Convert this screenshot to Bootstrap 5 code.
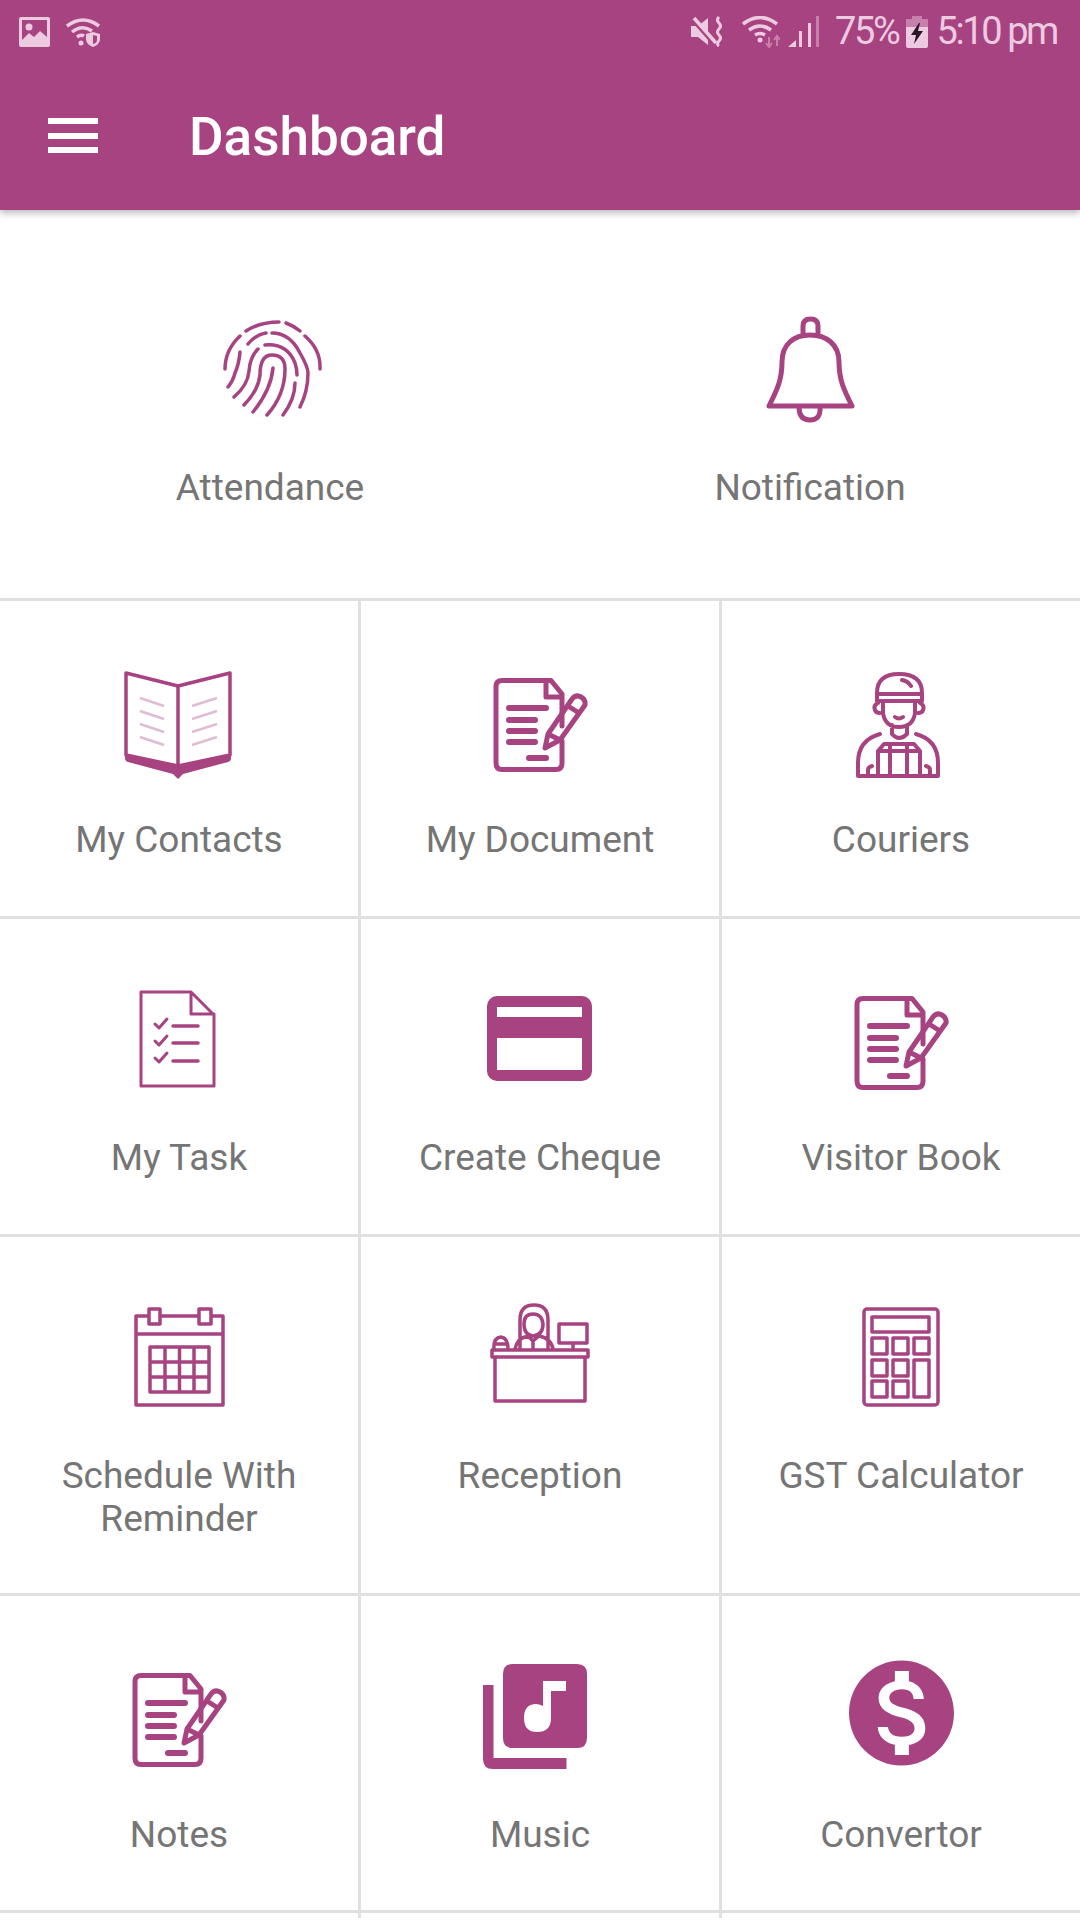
<!DOCTYPE html>
<html lang="en">
<head>
  <meta charset="UTF-8" />
  <title>Dashboard</title>
  <link href="https://cdn.jsdelivr.net/npm/bootstrap@5.3.0/dist/css/bootstrap.min.css" rel="stylesheet"/>
  <style>
    body { font-family: Roboto, "Liberation Sans", sans-serif; color: #757575; background: #fff; }
    .app-screen { height: 1920px; overflow: hidden; }
    .app-head { background: #a74380; height: 210px; box-shadow: 0 3px 7px rgba(0,0,0,.28); position: relative; }
    .status-bar { height: 63px; padding: 0 23px 0 19px; color: #eccbe0; font-size: 38px; letter-spacing: -2.4px; }
    .tool-bar { height: 147px; padding: 0 0 2px 48px; }
    .burger { width: 50px; height: 35px; }
    .burger span { display: block; height: 6px; background: #fff; }
    .app-title { margin: 4px 0 0 91px; font-size: 53px; font-weight: 500; color: #fff; line-height: 1; }
    .svg-line { fill: none; stroke: #a74380; stroke-width: 5; stroke-linecap: round; stroke-linejoin: round; }
    .svg-fill { fill: #a74380; }
    .sw-3 { stroke-width: 3; }
    .sw-35 { stroke-width: 3.5; }
    .sw-4 { stroke-width: 4; }
    .sw-6 { stroke-width: 6; }
    .tile-label { font-size: 37px; line-height: 43px; margin-top: 35px; }
    .top-tile { padding: 100px 0 89px; }
    .top-tile .tile-label { margin-top: 36px; }
    .tile-grid { border-top: 3px solid #e0e0e0; grid-template-columns: 361px 361px 1fr; grid-template-rows: 318px 318px 359px 317px 5px; }
    .tile { padding-top: 62px; border-right: 3px solid #e0e0e0; border-bottom: 3px solid #e0e0e0; }
    .tile:nth-child(3n) { border-right: 0; }
    .tile-end { padding-top: 0; border-bottom: 0; }
  </style>
</head>
<body>
  <svg width="0" height="0" class="d-block">
    <symbol id="doc-pen" viewBox="0 0 120 120">
      <path class="svg-line" d="M66 17.500H22q-6 0-6 6V100q0 6.500 6 6.500h54q6 0 6-6.500V78M82 63V31L71 17.500H66V34h16"/>
      <path class="svg-line sw-6" d="M29 45h37M29 57h26M29 68h26M29 79h26M49 95h17"/>
      <path class="svg-line" d="M65 85l3-14 24-35q4-5 9-2t4 8L80 77zM68 71l12 6M88 43l11 7"/>
    </symbol>
  </svg>

  <div class="app-screen d-flex flex-column">
    <header class="app-head flex-shrink-0">
      <div class="status-bar d-flex justify-content-between align-items-center">
        <div class="d-flex align-items-center gap-3">
          <svg width="31" height="30" viewBox="0 0 31 30"><rect width="31" height="30" rx="2" fill="#eccbe0"/><rect x="3" y="3" width="25" height="20" fill="#a74380"/><circle cx="10" cy="10" r="3.500" fill="#eccbe0"/><path d="M3 23l7-7 5 4 6-6 7 6v6H3z" fill="#eccbe0"/></svg>
          <svg width="35" height="30" viewBox="0 0 35 30"><g fill="none" stroke="#eccbe0" stroke-width="3.500"><path d="M1 9q16-12 32 0M6 15q10-8 20-1M11 20q4-3 7-1"/></g><circle cx="15" cy="26" r="2.500" fill="#eccbe0"/><path d="M27 15l7 2v6q-1 5-7 7-6-2-7-7v-6z" fill="#eccbe0"/><path d="M27 18l4 1v4q0 3-4 4z" fill="#a74380"/></svg>
        </div>
        <div class="d-flex align-items-center">
          <svg width="35" height="31" viewBox="0 0 35 31" class="me-3"><path d="M0 10h7l10-8v27l-10-8H0z" fill="#eccbe0"/><path d="M1 2l22 25" stroke="#a74380" stroke-width="5"/><path d="M3 2l22 25" stroke="#eccbe0" stroke-width="3.500"/><path d="M28 1q-3 3 0 6t0 6 0 6 0 6 0 5" fill="none" stroke="#eccbe0" stroke-width="3"/></svg>
          <svg width="38" height="32" viewBox="0 0 38 32"><g fill="none" stroke="#eccbe0" stroke-width="3.500"><path d="M1 8q17-13 34 0M7 14q11-8 22 0M13 19q5-3 10 0"/></g><circle cx="18" cy="24" r="2.500" fill="#eccbe0"/><path d="M27 21v9M24 27l3 4 3-4M35 30v-9M32 24l3-4 3 4" fill="none" stroke="#c77fab" stroke-width="2"/></svg>
          <svg width="31" height="32" viewBox="0 0 31 32" class="ms-2"><path d="M0 31l8-7v7z" fill="#eccbe0"/><rect x="11" y="15" width="3" height="16" fill="#eccbe0"/><rect x="20" y="7" width="3" height="24" fill="#eccbe0"/><rect x="28" y="0" width="3" height="31" fill="#c77fab"/></svg>
          <span class="ms-3">75%</span>
          <svg width="22" height="32" viewBox="0 0 22 32" class="ms-2"><rect x="6" y="0" width="10" height="4" fill="#c77fab"/><rect y="3" width="22" height="29" rx="2" fill="#eccbe0"/><rect y="3" width="22" height="8" fill="#c77fab"/><path d="M13 7L5 19h5l-2 9 9-13h-5l2-8z" fill="#2a1624"/></svg>
          <span class="ms-2">5:10 pm</span>
        </div>
      </div>
      <div class="tool-bar d-flex align-items-center">
        <div class="burger d-flex flex-column justify-content-between"><span></span><span></span><span></span></div>
        <h1 class="app-title">Dashboard</h1>
      </div>
    </header>

    <main>
      <div class="row g-0">
        <div class="col-6 top-tile d-flex flex-column align-items-center text-center">
          <svg width="120" height="120" viewBox="0 0 120 120" class="d-block">
            <g class="svg-line sw-35">
              <path d="M36 21q14-9 33-9M76 13q8 3 14 8M30 26Q15 40 15 59M95 26q16 14 15 33"/>
              <path d="M38 34q7-9 18-11M62 23q18 0 28 20 8 14 8 20 0 18-8 34M30 42q-1 12-5 21-2 8-7 14"/>
              <path d="M48 39q-8 8-9 22-1 14-15 26M55 35q22-2 30 18 2 6 2 12M85 73q0 16-12 32"/>
              <path d="M34 95q14-14 16-30 0-20 12-20 13 0 13 14 0 26-18 46"/>
              <path d="M43 102q18-22 20-44"/>
            </g>
          </svg>
          <div class="tile-label">Attendance</div>
        </div>
        <div class="col-6 top-tile d-flex flex-column align-items-center text-center">
          <svg width="120" height="120" viewBox="0 0 120 120" class="d-block">
            <path class="svg-line" d="M53 25V16q0-7 7.500-7T68 16v9M19 96C27 80 32 70 32 52 32 34 44 25 60 25S89 34 89 52C89 70 94 80 102 96zM49 97q0 13 11 13t10-13"/>
          </svg>
          <div class="tile-label">Notification</div>
        </div>
      </div>

      <div class="d-grid tile-grid">
        <div class="tile d-flex flex-column align-items-center text-center">
          <svg width="120" height="120" viewBox="0 0 120 120" class="d-block">
            <path class="svg-fill" d="M6 91v4q0 3 3 4l45 12 5 5 5-5 45-12q3-1 3-4v-4L59 103z"/>
            <path class="svg-line sw-35" d="M7 10l52 13 52-13v82l-52 11L7 92zM59 23v80"/>
            <path fill="none" stroke="#e0bcd4" stroke-width="2.500" d="M21 35l24 8M21 48l24 8M21 61l24 8M21 74l24 8M73 43l25-8M73 56l25-8M73 69l25-8M73 82l25-8"/>
          </svg>
          <div class="tile-label">My Contacts</div>
        </div>
        <div class="tile d-flex flex-column align-items-center text-center">
          <svg width="120" height="120" class="d-block"><use href="#doc-pen"/></svg>
          <div class="tile-label">My Document</div>
        </div>
        <div class="tile d-flex flex-column align-items-center text-center">
          <svg width="120" height="120" viewBox="0 0 120 120" class="d-block">
            <path class="svg-line sw-4" d="M36 38V30q0-19 22-19 23 0 23 19v8zM36 31h45M61 17q6 1 9 6M42 38v12q2 14 16 14t16-14V38M37 40q-5 2-3 7 1 3 5 3M79 40q5 2 3 7-1 3-5 3M54 54q4 3 8 0M51 62v9q7 8 15 0v-9M39 71q-22 6-22 29v13h80v-13q0-23-22-29M37 113V88l6-7h30l6 7v25M37 88h42M49 81v32M66 81v32M27 113v-6q0-3 4-4M89 113v-6q0-3-4-4"/>
          </svg>
          <div class="tile-label">Couriers</div>
        </div>

        <div class="tile d-flex flex-column align-items-center text-center">
          <svg width="120" height="120" viewBox="0 0 120 120" class="d-block">
            <path class="svg-line sw-3" d="M72 11H22v94h73V34L72 11v22h23"/>
            <path class="svg-line sw-3" d="M36 43l4 4 8-9M36 60l4 4 8-9M36 77l4 4 8-9"/>
            <path class="svg-line sw-35" d="M54 45h25M54 62h25M54 80h25"/>
          </svg>
          <div class="tile-label">My Task</div>
        </div>
        <div class="tile d-flex flex-column align-items-center text-center">
          <svg width="120" height="120" viewBox="0 0 120 120" class="d-block">
            <rect class="svg-fill" x="7" y="15" width="105" height="85" rx="10"/>
            <rect x="17" y="26" width="85" height="10" fill="#fff"/>
            <rect x="17" y="57" width="85" height="32" fill="#fff"/>
          </svg>
          <div class="tile-label">Create Cheque</div>
        </div>
        <div class="tile d-flex flex-column align-items-center text-center">
          <svg width="120" height="120" class="d-block"><use href="#doc-pen"/></svg>
          <div class="tile-label">Visitor Book</div>
        </div>

        <div class="tile d-flex flex-column align-items-center text-center">
          <svg width="120" height="120" viewBox="0 0 120 120" class="d-block">
            <path class="svg-line sw-35" d="M29 17H17v89h87V17H92M41 17h39M17 35h87M30 10h11v15H30zM80 10h12v15H80z"/>
            <path class="svg-line sw-35" d="M31 48h59v45H31zM31 63h59M31 78h59M46 48v45M60.500 48v45M75 48v45"/>
          </svg>
          <div class="tile-label">Schedule With<br>Reminder</div>
        </div>
        <div class="tile d-flex flex-column align-items-center text-center">
          <svg width="120" height="120" viewBox="0 0 120 120" class="d-block">
            <path class="svg-line sw-35" d="M15 58v44h90V58M12 51h96v7H12zM40 50V21q0-15 14-15t14 15v29M53 15q-9 0-9 10 0 11 9 12 10-1 10-12-1-10-10-10M35 50q2-11 13-13l5 5 6-5q12 2 14 13M53 42v8M79 25h28v19H79zM93 44v7M14 50q-1-11 7-12 7 1 7 12M15 45h12"/>
          </svg>
          <div class="tile-label">Reception</div>
        </div>
        <div class="tile d-flex flex-column align-items-center text-center">
          <svg width="120" height="120" viewBox="0 0 120 120" class="d-block">
            <rect class="svg-line sw-35" x="23" y="10" width="74" height="96" rx="3"/>
            <path class="svg-line sw-35" d="M31 18h57v15H31zM31 39h15v16H31zM52 39h15v16H52zM73 39h15v16H73zM31 61h15v16H31zM52 61h15v16H52zM73 61h15v37H73zM31 82h15v16H31zM52 82h15v16H52z"/>
          </svg>
          <div class="tile-label">GST Calculator</div>
        </div>

        <div class="tile d-flex flex-column align-items-center text-center">
          <svg width="120" height="120" class="d-block"><use href="#doc-pen"/></svg>
          <div class="tile-label">Notes</div>
        </div>
        <div class="tile d-flex flex-column align-items-center text-center">
          <svg width="120" height="120" viewBox="0 0 120 120" class="d-block">
            <path class="svg-fill" d="M3 27h10.500v73H86.500v11H13q-10 0-10-10z"/>
            <path class="svg-fill" fill-rule="evenodd" d="M33 6h64q10 0 10 10v64q0 10-10 10H33q-10 0-10-10V16q0-10 10-10zM63 23v25q-4-2-7-2-12 0-12 14t13 14q14 0 14-14V33h15V23z"/>
          </svg>
          <div class="tile-label">Music</div>
        </div>
        <div class="tile d-flex flex-column align-items-center text-center">
          <svg width="120" height="120" viewBox="0 0 120 120" class="d-block">
            <path class="svg-fill" transform="translate(-2.500 -8) scale(5.250)" d="M12 2C6.480 2 2 6.480 2 12s4.480 10 10 10 10-4.480 10-10S17.520 2 12 2zm1.410 16.090V20h-2.670v-1.930c-1.710-.36-3.160-1.460-3.270-3.400h1.960c.1 1.050.82 1.870 2.650 1.870 1.960 0 2.400-.98 2.400-1.590 0-.83-.44-1.610-2.670-2.140-2.480-.6-4.180-1.620-4.180-3.670 0-1.720 1.390-2.840 3.110-3.210V4h2.670v1.950c1.860.45 2.790 1.860 2.850 3.390H14.300c-.05-1.110-.64-1.870-2.220-1.870-1.500 0-2.400.68-2.400 1.640 0 .84.65 1.390 2.670 1.910s4.180 1.390 4.180 3.910c-.01 1.830-1.380 2.830-3.120 3.160z"/>
          </svg>
          <div class="tile-label">Convertor</div>
        </div>

        <div class="tile tile-end"></div>
        <div class="tile tile-end"></div>
        <div class="tile tile-end"></div>
      </div>
    </main>
  </div>
</body>
</html>
